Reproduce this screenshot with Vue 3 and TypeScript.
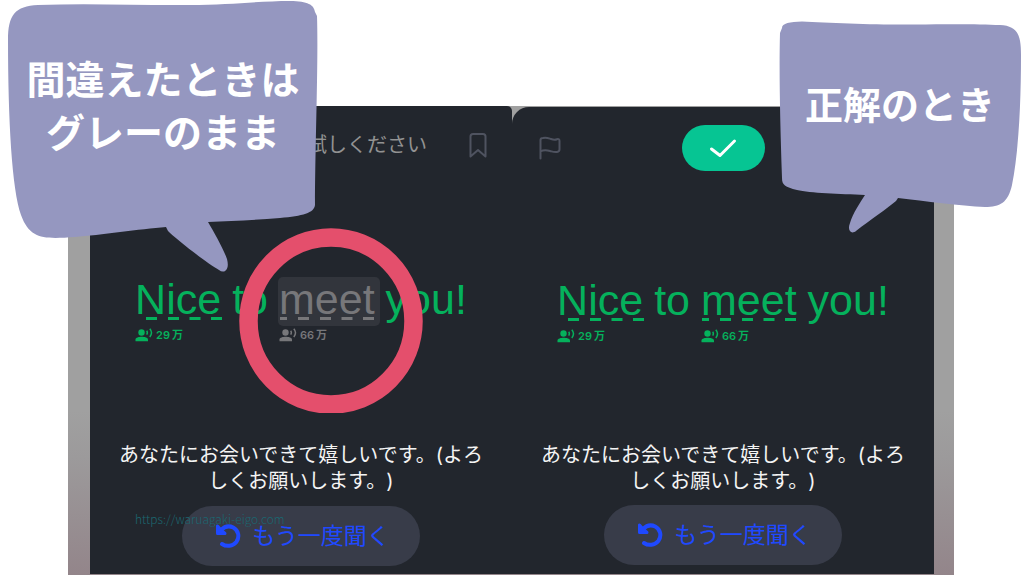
<script setup lang="ts">
interface Word {
  text: string
  dashes?: string
  count?: string
  pending?: boolean
}

interface Panel {
  id: string
  hint?: string
  answered: boolean
  words: Word[]
}

const makeWords = (pending: boolean): Word[] => [
  { text: 'Nice', dashes: 'M11 1.5h11M33 1.5h11M54.500 1.5h11M76 1.5h11', count: '29' },
  { text: 'to' },
  { text: 'meet', dashes: 'M1 1.5h7M19 1.5h11M41 1.5h11M62.500 1.5h11M84 1.5h11', count: '66', pending },
  { text: 'you!' },
]

const panels: Panel[] = [
  { id: 'wrong', hint: '試しください', answered: false, words: makeWords(true) },
  { id: 'right', answered: true, words: makeWords(false) },
]
</script>

<template>
  <main class="page">
    <div class="stage">
      <section v-for="panel in panels" :key="panel.id" class="panel" :class="panel.id">
        <header class="bar">
          <template v-if="panel.answered">
            <button class="icon-button" type="button" aria-label="報告">
              <svg width="22" height="24" viewBox="0 0 22 24" fill="none" stroke="#4f5360" stroke-width="2" stroke-linecap="round" stroke-linejoin="round">
                <path d="M1.500 22.500V4Q1.500 2 4 2C7 1 9 2 12 3S16 4 18 3.200Q20.500 2.500 20.500 5V13.500Q20.500 15.500 18 16C15 16.500 13 15.500 11 15S5 13.500 1.500 15.500" />
              </svg>
            </button>
            <button class="done" type="button" aria-label="正解">
              <svg width="28" height="20" viewBox="0 0 28 20" fill="none" stroke="#fff" stroke-width="3" stroke-linecap="round" stroke-linejoin="round">
                <path d="M2.500 11L11 17.500L25.500 3" />
              </svg>
            </button>
          </template>
          <template v-else>
            <span class="hint">{{ panel.hint }}</span>
            <button class="icon-button" type="button" aria-label="ブックマーク">
              <svg width="18" height="26" viewBox="0 0 18 26" fill="none" stroke="#4f5360" stroke-width="2" stroke-linecap="round" stroke-linejoin="round">
                <path d="M1.500 24.500V4.500Q1.500 2 4 2H14Q16.500 2 16.500 4.500V24.500L9 18Z" />
              </svg>
            </button>
          </template>
        </header>

        <div class="sentence">
          <div v-for="word in panel.words" :key="word.text" class="word" :class="{ pending: word.pending }">
            <span class="text">{{ word.text }}</span>
            <svg v-if="word.dashes" class="dashes" width="98" height="3" viewBox="0 0 98 3" fill="none" stroke="currentColor" stroke-width="3">
              <path :d="word.dashes" />
            </svg>
            <span v-if="word.count" class="meta">
              <svg width="18" height="14" viewBox="0 0 18 14" aria-hidden="true">
                <circle cx="6.500" cy="4.500" r="3.200" fill="currentColor" />
                <path d="M0.500 13.200V11.500C0.500 9.500 4 8.700 6.700 8.700S13 9.500 13 11.500V13.200Z" fill="currentColor" />
                <path d="M11.700 2.700Q13 4.500 11.700 6.600M14.800 0.800Q18.200 4.700 14.800 9" fill="none" stroke="currentColor" stroke-width="1.500" />
              </svg>
              <span>{{ word.count }}</span><span class="unit">万</span>
            </span>
            <svg v-if="word.pending" class="ring" width="184" height="185" viewBox="0 0 184 185" fill="none">
              <ellipse cx="92" cy="93" rx="82.500" ry="83.500" stroke="#e44f6c" stroke-width="18.500" />
            </svg>
          </div>
        </div>

        <p class="translation">あなたにお会いできて嬉しいです。(よろ<br />しくお願いします。)</p>

        <button class="replay" type="button">
          <svg width="26" height="26" viewBox="0 0 26 26" fill="none" stroke="#1f49ff" stroke-linecap="round" stroke-linejoin="round">
            <path d="M6 7C9.500 3.500 14 2.500 18.200 4.500C23.500 7.200 25 14 21.300 19C17.800 23.300 11.500 24 7 21" stroke-width="4" />
            <path d="M2.500 3V10.500H10L6 7Z" fill="#1f49ff" stroke-width="3" />
          </svg>
          <span>もう一度聞く</span>
        </button>

        <a v-if="!panel.answered" class="site" href="#">https://waruagaki-eigo.com</a>
      </section>
    </div>

    <div class="bubble bubble-wrong">
      <svg width="312" height="274" viewBox="7 0 312 274" aria-hidden="true">
        <path fill="#9597c0" d="M8 40C8 15 15 6 38 5C90 3 140 5.500 190 5C230 5 260 1 290 1C308 1 314 5 315 12L317 16C318.500 60 315 150 315 205C314 213 303 216 280 218C255 220 230 221 208 222C214 232 224 250 227 259C230 270 224 274 219 270C205 262 175 238 168 231L166 227C140 229 100 235 75 237C45 239 30 240 21 215C12 190 8 120 8 40Z" />
      </svg>
      <p>間違えたときは<br />グレーのまま</p>
    </div>

    <div class="bubble bubble-right">
      <svg width="244" height="214" viewBox="778 20 244 214" aria-hidden="true">
        <path fill="#9597c0" d="M780 33L782 28C782 23 790 22 802 21.500C830 23 880 25 915 24.500C950 24 980 24 1000 25C1018 26 1021 35 1021 55C1021 100 1019 150 1012 185C1008 203 1000 207 985 207C960 206 925 201 898 198L896 201C888 208 870 220 856 231C851 235 847 230 850 223C853 213 860 203 865 195C840 194 810 193 797 190C785 187 782 185 782 178C780 120 779 70 780 33Z" />
      </svg>
      <p>正解のとき</p>
    </div>
  </main>
</template>

<style>
body {
  margin: 0;
  background: #fff;
}
</style>

<style scoped>
.page {
  position: relative;
  overflow: hidden;
  padding: 106px 70px 0 68px;
  font-family: Inter, "Noto Sans CJK JP", sans-serif;
  text-spacing-trim: space-all;
}

p {
  margin: 0;
}

button {
  border: 0;
  padding: 0;
  background: none;
  font: inherit;
  cursor: pointer;
}

svg {
  display: block;
  flex: none;
}

.stage {
  display: flex;
  padding: 0 20px 1px 22px;
  background: linear-gradient(#a0a0a0 65%, #9c9a9b 75%, #93858a);
}

.panel {
  position: relative;
  flex: 1;
  min-width: 0;
  display: flex;
  flex-direction: column;
  align-items: center;
  background: #22262d;
  color: #05b15c;
}

.wrong {
  border-radius: 0 5px 0 0;
  padding-bottom: 8px;
}

.right {
  margin-top: 1px;
  border-radius: 17px 0 0 0;
  padding-bottom: 9px;
}

.bar {
  box-sizing: border-box;
  align-self: stretch;
  display: flex;
  align-items: center;
  justify-content: flex-end;
  gap: 42px;
  height: 78px;
  padding: 0 25px;
}

.right .bar {
  display: grid;
  grid-template-columns: 1fr auto 1fr;
  gap: 0;
  height: 82px;
  padding: 0 27px;
}

.icon-button {
  justify-self: start;
}

.hint {
  color: #929292;
  font-size: 20px;
  line-height: 26px;
  white-space: nowrap;
}

.done {
  display: grid;
  place-items: center;
  width: 83px;
  height: 46px;
  border-radius: 23px;
  background: #06c593;
}

.sentence {
  display: flex;
  align-items: flex-start;
  gap: 11px;
  height: 69px;
  padding-top: 94px;
  font-family: "Liberation Sans", Arial, sans-serif;
  font-size: 43px;
  line-height: 42px;
}

.right .sentence {
  padding-top: 90px;
}

.word {
  position: relative;
}

.text {
  display: block;
  position: relative;
}

.pending {
  color: #77777a;
}

.pending .text {
  z-index: 0;
}

.pending .text::before {
  content: "";
  position: absolute;
  inset: -1px -5px -6px -1px;
  z-index: -1;
  border-radius: 5px;
  background: #32353c;
}

.dashes {
  position: relative;
  margin: -3px -20px 0 0;
}

.meta {
  display: flex;
  align-items: center;
  height: 14px;
  margin-top: 8px;
  font-family: Inter, "Noto Sans CJK JP", sans-serif;
  font-size: 11px;
  font-weight: 600;
  line-height: 14px;
}

.meta svg {
  margin-right: 3px;
}

.unit {
  margin-left: 2px;
}

.ring {
  position: absolute;
  z-index: 2;
  top: -50px;
  left: -40px;
}

.translation {
  margin-top: 95px;
  color: #f4f4f4;
  font-size: 20px;
  line-height: 26px;
  text-align: center;
  white-space: nowrap;
}

.right .translation {
  margin-top: 94px;
}

.replay {
  display: flex;
  align-items: center;
  gap: 11px;
  margin-top: 12px;
  padding: 0 30px 0 33px;
  height: 60px;
  border-radius: 30px;
  background: #383c49;
  color: #1f49ff;
  font-size: 23px;
  line-height: 30px;
  white-space: nowrap;
}

.right .replay {
  margin-top: 11px;
}

.site {
  position: absolute;
  left: 45px;
  bottom: 47px;
  color: #1b6670;
  font-family: "Noto Sans CJK JP", sans-serif;
  font-size: 12px;
  font-weight: 300;
  line-height: 16px;
  text-decoration: none;
}

.bubble {
  position: absolute;
  display: grid;
}

.bubble > * {
  grid-area: 1 / 1;
}

.bubble p {
  color: #fff;
  font-family: "Noto Sans CJK JP", sans-serif;
  font-weight: 700;
  line-height: 53px;
  text-align: center;
  white-space: nowrap;
}

.bubble-wrong {
  top: 0;
  left: 7px;
}

.bubble-wrong p {
  padding-top: 51px;
  font-size: 39px;
}

.bubble-right {
  top: 20px;
  right: 2px;
}

.bubble-right p {
  padding-top: 56px;
  font-size: 38px;
}
</style>
